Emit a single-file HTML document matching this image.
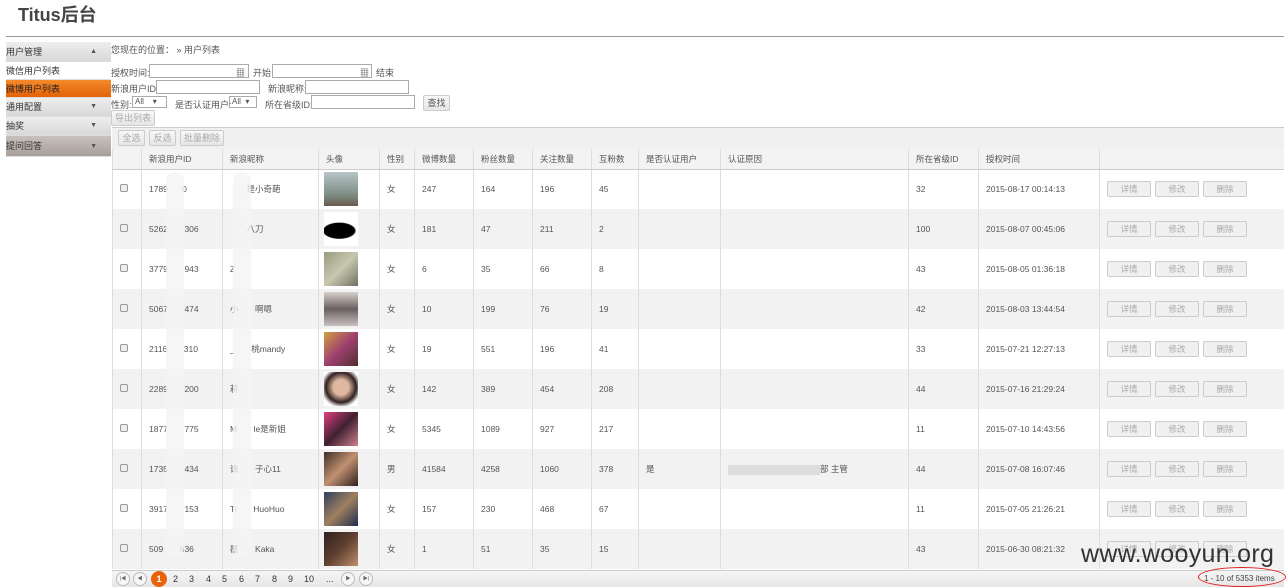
<!DOCTYPE html>
<html><head><meta charset="utf-8"><style>
*{box-sizing:border-box;margin:0;padding:0}
body{width:1287px;height:587px;overflow:hidden;background:#fff;font-family:"Liberation Sans","Noto Sans CJK SC",sans-serif;font-size:9px;color:#555;position:relative}
.a{position:absolute}
h1{position:absolute;left:18px;top:1px;font-size:18px;font-weight:bold;color:#444}
.hr{left:6px;top:36px;width:1278px;height:1px;background:#999}
.side div{position:absolute;left:6px;width:105px;padding-left:0;line-height:18px;font-size:9px;color:#333;border-bottom:1px solid #ddd}
.g{background:linear-gradient(#eee,#d8d8d8)}
.tri{position:absolute;right:14px;font-size:7px;color:#555}
input.t{position:absolute;height:14px;border:1px solid #aaa;background:#fff}
.btn{position:absolute;height:16px;border:1px solid #ccc;border-radius:2px;background:linear-gradient(#f8f8f8,#e6e6e6);color:#aaa;font-size:9px;text-align:center;line-height:14px}
table{position:absolute;left:112px;top:149px;border-collapse:collapse;width:1172px}
td,th{border-left:1px solid #ddd;font-weight:normal;text-align:left;padding-left:7px;font-size:8.5px;color:#555}
th{height:20px;background:#f3f3f3;border-bottom:1px solid #ccc}
td{height:40px}
tr:nth-child(odd) td{background:#f2f2f2}
.cb{display:inline-block;width:8px;height:8px;border:1px solid #999;border-radius:2px;background:#eee;margin-left:0}
.av{display:block;width:34px;height:34px;margin-left:-2px}
.ob{display:inline-block;width:44px;height:16px;border:1px solid #ccc;border-radius:2px;background:#f0f0f0;color:#aaa;text-align:center;line-height:14px;margin-right:4px}
.blur{position:absolute;background:#f4f4f4;border-radius:10px;opacity:.8}
.pg{left:112px;top:570px;width:1172px;height:17px;background:linear-gradient(#f6f6f6,#e6e6e6);border-top:1px solid #ccc}
.pg span{position:absolute;top:3px;font-size:9px;color:#333}
.c{position:absolute;top:1px;width:14px;height:14px;border:1px solid #bbb;border-radius:50%;background:#f6f6f6;font-size:5px;text-align:center;line-height:12px;color:#666}
</style></head><body>
<h1>Titus后台</h1>
<div class="a hr"></div>
<div class="side">
<div class="g" style="top:42px;height:20px;line-height:20px">用户管理<span class="tri">▲</span></div>
<div style="top:62px;height:18px;background:#fff">微信用户列表</div>
<div style="top:80px;height:18px;background:linear-gradient(#f48a2a,#e2620a);color:#222">微博用户列表</div>
<div class="g" style="top:98px;height:19px">通用配置<span class="tri">▼</span></div>
<div class="g" style="top:117px;height:19px">抽奖<span class="tri">▼</span></div>
<div style="top:136px;height:21px;background:linear-gradient(#c8c0bc,#a89f9a);line-height:21px">提问回答<span class="tri">▼</span></div>
</div>
<div class="a" style="left:111px;top:43px">您现在的位置： » 用户列表</div>
<div class="a" style="left:111px;top:66px">授权时间:</div>
<input class="t" style="left:149px;top:64px;width:100px"><div class="a" style="left:236px;top:66px;font-size:9px">▦</div>
<div class="a" style="left:253px;top:66px">开始</div>
<input class="t" style="left:272px;top:64px;width:100px"><div class="a" style="left:360px;top:66px;font-size:9px">▦</div>
<div class="a" style="left:376px;top:66px">结束</div>
<div class="a" style="left:111px;top:82px">新浪用户ID:</div><input class="t" style="left:156px;top:80px;width:104px">
<div class="a" style="left:268px;top:82px">新浪昵称:</div><input class="t" style="left:305px;top:80px;width:104px">
<div class="a" style="left:111px;top:98px">性别:</div><div class="a" style="left:132px;top:96px;width:35px;height:12px;border:1px solid #aaa;font-size:8px;padding-left:2px">All &nbsp; &nbsp;▾</div>
<div class="a" style="left:175px;top:98px">是否认证用户:</div><div class="a" style="left:229px;top:96px;width:28px;height:12px;border:1px solid #aaa;font-size:8px;padding-left:2px">All &nbsp;▾</div>
<div class="a" style="left:265px;top:98px">所在省级ID:</div><input class="t" style="left:311px;top:95px;width:104px">
<div class="btn" style="left:423px;top:95px;width:27px;color:#555">查找</div>
<div class="btn" style="left:111px;top:110px;width:44px">导出列表</div>
<div class="a" style="left:112px;top:127px;width:1172px;height:22px;background:#f0f0f0;border-top:1px solid #ccc"></div>
<div class="btn" style="left:118px;top:130px;width:27px">全选</div>
<div class="btn" style="left:149px;top:130px;width:27px">反选</div>
<div class="btn" style="left:180px;top:130px;width:44px">批量删除</div>
<table>
<tr><th style="width:29px"></th><th style="width:81px">新浪用户ID</th><th style="width:96px">新浪昵称</th><th style="width:61px">头像</th><th style="width:35px">性别</th><th style="width:59px">微博数量</th><th style="width:59px">粉丝数量</th><th style="width:59px">关注数量</th><th style="width:47px">互粉数</th><th style="width:82px">是否认证用户</th><th style="width:188px">认证原因</th><th style="width:70px">所在省级ID</th><th style="width:121px">授权时间</th><th></th></tr>
<tr><td><span class="cb"></span></td><td>1789&nbsp;&nbsp;&nbsp;&nbsp;&nbsp;&nbsp;0</td><td>&nbsp;&nbsp;&nbsp;&nbsp;&nbsp;&nbsp;&nbsp;是小奇葩</td><td><span class="av" style="background:linear-gradient(#b8c4c8,#7a8a80 70%,#6a5a50)"></span></td><td>女</td><td>247</td><td>164</td><td>196</td><td>45</td><td></td><td></td><td>32</td><td>2015-08-17 00:14:13</td><td><span class="ob">详情</span><span class="ob">修改</span><span class="ob">删除</span></td></tr>
<tr><td><span class="cb"></span></td><td>5262&nbsp;&nbsp;&nbsp;&nbsp;&nbsp;&nbsp;&nbsp;306</td><td>&nbsp;&nbsp;&nbsp;&nbsp;&nbsp;&nbsp;&nbsp;八刀</td><td><span class="av" style="background:radial-gradient(ellipse 50% 25% at 45% 55%,#000 90%,#fff 100%)"></span></td><td>女</td><td>181</td><td>47</td><td>211</td><td>2</td><td></td><td></td><td>100</td><td>2015-08-07 00:45:06</td><td><span class="ob">详情</span><span class="ob">修改</span><span class="ob">删除</span></td></tr>
<tr><td><span class="cb"></span></td><td>3779&nbsp;&nbsp;&nbsp;&nbsp;&nbsp;&nbsp;&nbsp;943</td><td>Z</td><td><span class="av" style="background:linear-gradient(135deg,#9a9a80,#c8c8b0,#707060)"></span></td><td>女</td><td>6</td><td>35</td><td>66</td><td>8</td><td></td><td></td><td>43</td><td>2015-08-05 01:36:18</td><td><span class="ob">详情</span><span class="ob">修改</span><span class="ob">删除</span></td></tr>
<tr><td><span class="cb"></span></td><td>5067&nbsp;&nbsp;&nbsp;&nbsp;&nbsp;&nbsp;&nbsp;474</td><td>小&nbsp;&nbsp;&nbsp;&nbsp;&nbsp;&nbsp;&nbsp;啊嗯</td><td><span class="av" style="background:linear-gradient(#d8d0cc,#6a6060,#c8c0c0)"></span></td><td>女</td><td>10</td><td>199</td><td>76</td><td>19</td><td></td><td></td><td>42</td><td>2015-08-03 13:44:54</td><td><span class="ob">详情</span><span class="ob">修改</span><span class="ob">删除</span></td></tr>
<tr><td><span class="cb"></span></td><td>2116&nbsp;&nbsp;&nbsp;&nbsp;&nbsp;&nbsp;&nbsp;310</td><td>_&nbsp;&nbsp;&nbsp;&nbsp;&nbsp;&nbsp;&nbsp;桃mandy</td><td><span class="av" style="background:linear-gradient(135deg,#d0a040,#a04070,#503030)"></span></td><td>女</td><td>19</td><td>551</td><td>196</td><td>41</td><td></td><td></td><td>33</td><td>2015-07-21 12:27:13</td><td><span class="ob">详情</span><span class="ob">修改</span><span class="ob">删除</span></td></tr>
<tr><td><span class="cb"></span></td><td>2289&nbsp;&nbsp;&nbsp;&nbsp;&nbsp;&nbsp;&nbsp;200</td><td>菥</td><td><span class="av" style="background:radial-gradient(circle at 50% 45%,#e0b8a0 30%,#302020 60%,#fff 80%)"></span></td><td>女</td><td>142</td><td>389</td><td>454</td><td>208</td><td></td><td></td><td>44</td><td>2015-07-16 21:29:24</td><td><span class="ob">详情</span><span class="ob">修改</span><span class="ob">删除</span></td></tr>
<tr><td><span class="cb"></span></td><td>1877&nbsp;&nbsp;&nbsp;&nbsp;&nbsp;&nbsp;&nbsp;775</td><td>M&nbsp;&nbsp;&nbsp;&nbsp;&nbsp;&nbsp;&nbsp;le是新姐</td><td><span class="av" style="background:linear-gradient(135deg,#e04080,#402030,#d08090)"></span></td><td>女</td><td>5345</td><td>1089</td><td>927</td><td>217</td><td></td><td></td><td>11</td><td>2015-07-10 14:43:56</td><td><span class="ob">详情</span><span class="ob">修改</span><span class="ob">删除</span></td></tr>
<tr><td><span class="cb"></span></td><td>1735&nbsp;&nbsp;&nbsp;&nbsp;&nbsp;&nbsp;&nbsp;434</td><td>谁&nbsp;&nbsp;&nbsp;&nbsp;&nbsp;&nbsp;&nbsp;子心11</td><td><span class="av" style="background:linear-gradient(135deg,#403028,#c09070,#302020)"></span></td><td>男</td><td>41584</td><td>4258</td><td>1060</td><td>378</td><td>是</td><td><span style="display:inline-block;width:92px;height:10px;background:#ddd;vertical-align:middle"></span>部 主管</td><td>44</td><td>2015-07-08 16:07:46</td><td><span class="ob">详情</span><span class="ob">修改</span><span class="ob">删除</span></td></tr>
<tr><td><span class="cb"></span></td><td>3917&nbsp;&nbsp;&nbsp;&nbsp;&nbsp;&nbsp;&nbsp;153</td><td>Ti&nbsp;&nbsp;&nbsp;&nbsp;&nbsp;&nbsp;&nbsp;HuoHuo</td><td><span class="av" style="background:linear-gradient(135deg,#304060,#a08060,#203050)"></span></td><td>女</td><td>157</td><td>230</td><td>468</td><td>67</td><td></td><td></td><td>11</td><td>2015-07-05 21:26:21</td><td><span class="ob">详情</span><span class="ob">修改</span><span class="ob">删除</span></td></tr>
<tr><td><span class="cb"></span></td><td>509&nbsp;&nbsp;&nbsp;&nbsp;&nbsp;&nbsp;&nbsp;636</td><td>覆&nbsp;&nbsp;&nbsp;&nbsp;&nbsp;&nbsp;&nbsp;Kaka</td><td><span class="av" style="background:linear-gradient(135deg,#302020,#604030,#c09070)"></span></td><td>女</td><td>1</td><td>51</td><td>35</td><td>15</td><td></td><td></td><td>43</td><td>2015-06-30 08:21:32</td><td><span class="ob">详情</span><span class="ob">修改</span><span class="ob">删除</span></td></tr>
</table>
<div class="blur" style="left:166px;top:172px;width:18px;height:385px"></div>
<div class="blur" style="left:233px;top:172px;width:18px;height:385px"></div>
<div class="a pg">
<div class="c" style="left:4px">|◀</div><div class="c" style="left:21px">◀</div>
<div class="c" style="left:39px;background:#e8620c;border-color:#e8620c;color:#fff;font-size:9px;font-weight:bold;top:0px;width:16px;height:16px;line-height:15px">1</div>
<span style="left:61px">2</span><span style="left:77px">3</span><span style="left:94px">4</span><span style="left:110px">5</span><span style="left:127px">6</span><span style="left:143px">7</span><span style="left:160px">8</span><span style="left:176px">9</span><span style="left:192px">10</span><span style="left:214px">...</span>
<div class="c" style="left:229px">▶</div><div class="c" style="left:247px">▶|</div>
<span style="left:1092px;font-size:8px;color:#444">1 - 10 of 5353 items</span>
<div class="a" style="left:1086px;top:-4px;width:88px;height:20px;border:1px solid #e02020;border-radius:50%"></div>
</div>
<div class="a" style="left:1081px;top:540px;font-size:25px;color:#333;letter-spacing:0.3px">www.wooyun.org</div>
</body></html>
